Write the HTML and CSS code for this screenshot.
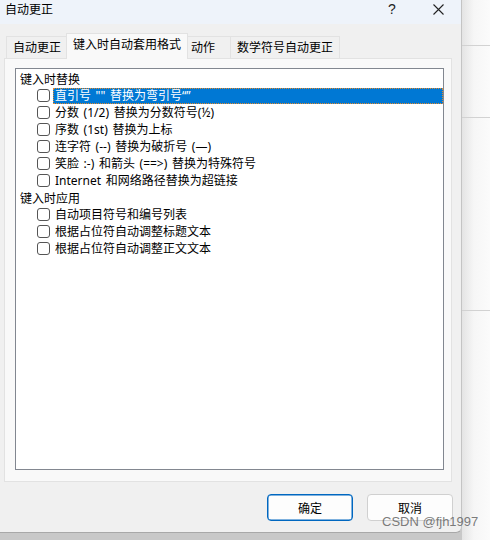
FILE: index.html
```html
<!DOCTYPE html>
<html lang="zh-CN">
<head>
<meta charset="UTF-8" />
<title>自动更正</title>
<link rel="stylesheet" href="styles.css">
</head>
<body>

<div class="dialog">
  <div class="titlebar">
    <span class="title">自动更正</span>
    <span class="tb-btn help">?</span>
    <span class="tb-btn close">
      <svg width="11" height="11" viewBox="0 0 11 11"><path d="M0.5 0.5 L10.5 10.5 M10.5 0.5 L0.5 10.5" stroke="#222" stroke-width="1.1" fill="none"/></svg>
    </span>
  </div>

  <div class="tabs">
    <div class="tab">自动更正</div>
    <div class="tab active">键入时自动套用格式</div>
    <div class="tab">动作</div>
    <div class="tab">数学符号自动更正</div>
  </div>

  <div class="panel">
    <div class="list">
      <div class="row head">键入时替换</div>
      <div class="row item selected"><span class="box"></span><span class="label">直引号 "" 替换为弯引号“”</span></div>
      <div class="row item"><span class="box"></span><span class="label">分数 (1/2) 替换为分数符号(½)</span></div>
      <div class="row item"><span class="box"></span><span class="label">序数 (1st) 替换为上标</span></div>
      <div class="row item"><span class="box"></span><span class="label">连字符 (--) 替换为破折号 (—)</span></div>
      <div class="row item"><span class="box"></span><span class="label">笑脸 :-) 和箭头 (==>) 替换为特殊符号</span></div>
      <div class="row item"><span class="box"></span><span class="label">Internet 和网络路径替换为超链接</span></div>
      <div class="row head">键入时应用</div>
      <div class="row item"><span class="box"></span><span class="label">自动项目符号和编号列表</span></div>
      <div class="row item"><span class="box"></span><span class="label">根据占位符自动调整标题文本</span></div>
      <div class="row item"><span class="box"></span><span class="label">根据占位符自动调整正文文本</span></div>
    </div>
  </div>

  <div class="footer">
    <button class="btn default">确定</button>
    <button class="btn">取消</button>
  </div>
</div>

<div class="side">
  <div class="line l1"></div>
  <div class="line l2"></div>
  <div class="line l3"></div>
</div>

<div class="watermark">CSDN @fjh1997</div>

</body>
</html>
```

FILE: styles.css
```css
body {
  margin: 0;
  width: 490px;
  height: 540px;
  display: flex;
  background: #c8c8c8;
  font-family: "Noto Sans", "Noto Sans CJK SC", sans-serif;
  font-size: 12px;
  color: #000;
  overflow: hidden;
  position: relative;
}
.dialog {
  width: 462px;
  height: 533px;
  background: #f0f0f0;
  border-right: 1px solid #c4c4c4;
  border-bottom: 1px solid #a8a8a8;
  border-bottom-right-radius: 6px;
  display: flex;
  flex-direction: column;
  box-sizing: border-box;
  z-index: 1;
}
.titlebar {
  height: 24px;
  background: #eef3fa;
  display: flex;
  align-items: center;
  padding-left: 5px;
}
.title {
  flex: 1;
  font-size: 12px;
  margin-top: -6px;
}
.tb-btn {
  width: 46px;
  height: 24px;
  display: flex;
  align-items: center;
  justify-content: center;
  margin-top: -6px;
}
.help {
  font-family: "Liberation Sans", sans-serif;
  font-size: 14px;
  color: #222;
}
.tabs {
  display: flex;
  align-items: flex-end;
  margin-top: 9px;
  padding-left: 6px;
  height: 25px;
}
.tab {
  height: 21px;
  line-height: 21px;
  padding: 0 5px 0 6px;
  border: 1px solid #e2e2e2;
  border-bottom: none;
  background: #f0f0f0;
  margin-left: -1px;
  white-space: nowrap;
}
.tab:first-child {
  margin-left: 0;
}
.tab.active {
  height: 25px;
  line-height: 22px;
  background: #f9f9f9;
  padding: 0 6px 0 6px;
  position: relative;
  z-index: 2;
  margin-bottom: -1px;
}
.tab:nth-child(3) {
  width: 34px;
  padding: 0 5px 0 3px;
}
.tab:nth-child(4) {
  padding: 0 6px 0 6px;
}
.panel {
  margin-left: 4px;
  width: 448px;
  height: 424px;
  box-sizing: border-box;
  background: #f9f9f9;
  border: 1px solid #e2e2e2;
  padding: 9px 7px 11px 10px;
}
.list {
  height: 100%;
  box-sizing: border-box;
  background: #fff;
  border: 1px solid #828790;
  padding-top: 1px;
}
.row {
  height: 17px;
  display: flex;
  align-items: center;
  white-space: nowrap;
}
.head {
  padding-left: 4px;
}
.item {
  padding-left: 21px;
}
.box {
  width: 11px;
  height: 11px;
  border: 1px solid #555;
  border-radius: 3px;
  background: #fff;
  flex: none;
}
.label {
  margin-left: 3px;
  padding-left: 2px;
  height: 16px;
  line-height: 16px;
  word-spacing: 1.5px;
}
.selected .label {
  flex: 1;
  background: #0078d4;
  color: #fff;
  outline: 1px dotted #e38a2c;
  outline-offset: -1px;
}
.footer {
  display: flex;
  justify-content: flex-end;
  gap: 14px;
  padding: 12px 8px 0 0;
}
.btn {
  width: 86px;
  height: 27px;
  box-sizing: border-box;
  border: 1px solid #d0d0d0;
  border-radius: 4px;
  background: #fdfdfd;
  font-family: inherit;
  font-size: 12px;
  color: #000;
  padding: 0;
}
.btn.default {
  border: 1px solid #0067c0;
  box-shadow: inset 0 0 0 0.5px #0067c0;
}
.side {
  flex: 1;
  height: 540px;
  background: linear-gradient(to right, #e4e4e4, #f6f6f6 12px, #fbfbfb);
  display: flex;
  flex-direction: column;
}
.line {
  height: 1px;
  background: #d2d2d2;
}
.l1 {
  margin-top: 45px;
}
.l2 {
  margin-top: 71px;
}
.l3 {
  margin-top: 192px;
}
.watermark {
  position: absolute;
  left: 382px;
  top: 514px;
  z-index: 3;
  font-family: "Liberation Sans", sans-serif;
  font-size: 13px;
  color: rgba(90, 90, 90, 0.8);
}
```
